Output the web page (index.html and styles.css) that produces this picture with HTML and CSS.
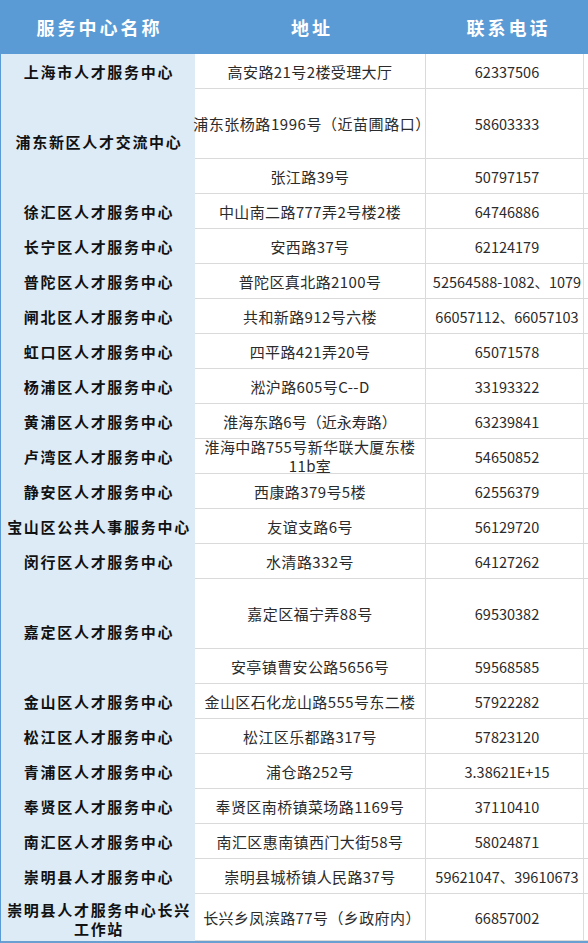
FILE: index.html
```html
<!DOCTYPE html>
<html lang="zh-CN">
<head>
<meta charset="utf-8">
<title>上海市人才服务中心</title>
<link rel="stylesheet" href="styles.css">
</head>
<body>
<div class="sheet">
  <div class="hd">服务中心名称</div><div class="hd">地址</div><div class="hd">联系电话</div>

  <div class="nm">上海市人才服务中心</div><div class="ad">高安路21号2楼受理大厅</div><div class="ph">62337506</div>
  <div class="nm span2">浦东新区人才交流中心</div><div class="ad wide">浦东张杨路1996号（近苗圃路口）</div><div class="ph">58603333</div>
  <div class="ad">张江路39号</div><div class="ph">50797157</div>
  <div class="nm">徐汇区人才服务中心</div><div class="ad">中山南二路777弄2号楼2楼</div><div class="ph">64746886</div>
  <div class="nm">长宁区人才服务中心</div><div class="ad">安西路37号</div><div class="ph">62124179</div>
  <div class="nm">普陀区人才服务中心</div><div class="ad">普陀区真北路2100号</div><div class="ph">52564588-1082、1079</div>
  <div class="nm">闸北区人才服务中心</div><div class="ad">共和新路912号六楼</div><div class="ph">66057112、66057103</div>
  <div class="nm">虹口区人才服务中心</div><div class="ad">四平路421弄20号</div><div class="ph">65071578</div>
  <div class="nm">杨浦区人才服务中心</div><div class="ad">淞沪路605号C--D</div><div class="ph">33193322</div>
  <div class="nm">黄浦区人才服务中心</div><div class="ad tight">淮海东路6号（近永寿路）</div><div class="ph">63239841</div>
  <div class="nm">卢湾区人才服务中心</div><div class="ad two">淮海中路755号新华联大厦东楼<br>11b室</div><div class="ph">54650852</div>
  <div class="nm">静安区人才服务中心</div><div class="ad">西康路379号5楼</div><div class="ph">62556379</div>
  <div class="nm">宝山区公共人事服务中心</div><div class="ad">友谊支路6号</div><div class="ph">56129720</div>
  <div class="nm">闵行区人才服务中心</div><div class="ad">水清路332号</div><div class="ph">64127262</div>
  <div class="nm span2">嘉定区人才服务中心</div><div class="ad">嘉定区福宁弄88号</div><div class="ph">69530382</div>
  <div class="ad">安亭镇曹安公路5656号</div><div class="ph">59568585</div>
  <div class="nm">金山区人才服务中心</div><div class="ad">金山区石化龙山路555号东二楼</div><div class="ph">57922282</div>
  <div class="nm">松江区人才服务中心</div><div class="ad">松江区乐都路317号</div><div class="ph">57823120</div>
  <div class="nm">青浦区人才服务中心</div><div class="ad">浦仓路252号</div><div class="ph">3.38621E+15</div>
  <div class="nm">奉贤区人才服务中心</div><div class="ad">奉贤区南桥镇菜场路1169号</div><div class="ph">37110410</div>
  <div class="nm">南汇区人才服务中心</div><div class="ad">南汇区惠南镇西门大街58号</div><div class="ph">58024871</div>
  <div class="nm">崇明县人才服务中心</div><div class="ad">崇明县城桥镇人民路37号</div><div class="ph">59621047、39610673</div>
  <div class="nm two">崇明县人才服务中心长兴<br>工作站</div><div class="ad mid">长兴乡凤滨路77号（乡政府内）</div><div class="ph">66857002</div>
</div>
</body>
</html>
```

FILE: styles.css
```css
* { box-sizing: border-box; }
html, body { margin: 0; padding: 0; background: #fff; }
body {
  font-family: "Noto Sans CJK SC", "Noto Sans", sans-serif;
  width: 588px;
}
.sheet {
  width: 588px;
  display: grid;
  grid-template-columns: 194px 231px 1fr;
  grid-template-rows: 54px 35px 70px repeat(12, 35px) 70px repeat(7, 35px) 47px;
  border-left: 1px solid #5b9bd5;
  border-bottom: 2px solid #6a9fd2;
}
.sheet > div {
  display: flex;
  align-items: center;
  justify-content: center;
  text-align: center;
  white-space: nowrap;
}
.hd {
  background: #5b9bd5;
  color: #fff;
  font-weight: 700;
  font-size: 18px;
  letter-spacing: 3px;
  padding-left: 3px;
}
.nm {
  background: #ddebf7;
  color: #111;
  font-weight: 700;
  font-size: 15px;
  letter-spacing: 1.7px;
  padding-left: 2px;
}
.nm.two { line-height: 19px; padding-top: 2px; }
.span2 { grid-row: span 2; }
.ad, .ph {
  color: #2b2b2b;
  border-bottom: 1px solid #dadada;
  font-size: 15px;
}
.ad {
  border-right: 1px solid #dadada;
  letter-spacing: 0.4px;
}
.ad.wide { letter-spacing: 0.55px; padding-left: 4px; }
.ad.mid { letter-spacing: 0.4px; padding-left: 4px; }
.ad.tight { letter-spacing: 0; }
.ad.two { line-height: 19px; }
.ph {
  font-size: 14.5px;
  letter-spacing: 0;
  box-shadow: inset -4px 0 0 #fff, inset -5px 0 0 #d6dde6;
}
```
